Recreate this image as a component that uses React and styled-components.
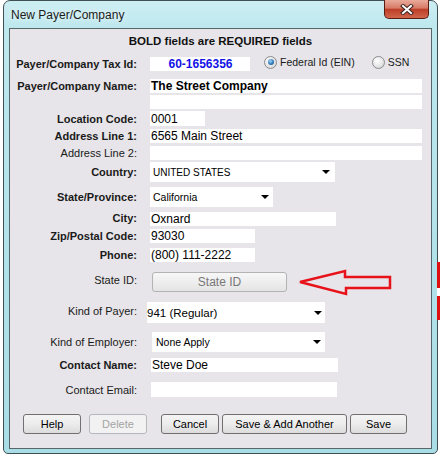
import React from "react";
import styled, { createGlobalStyle, css } from "styled-components";

const GlobalStyle = createGlobalStyle`
  body {
    margin: 0;
    background: #fff;
    font-family: "Liberation Sans", Arial, sans-serif;
  }
`;

const Page = styled.div`
  position: relative;
  width: 440px;
  height: 457px;
  overflow: hidden;
  padding-left: 3px;
  box-sizing: border-box;
`;

const Window = styled.div`
  width: 435px;
  height: 454px;
  box-sizing: border-box;
  border: 1px solid #3f4f54;
  border-radius: 7px 7px 5px 5px;
  background: linear-gradient(180deg, #cdeef3 0, #bde8ee 26px, #a9dde5 100%);
  display: flex;
  flex-direction: column;
  padding: 0 5px 4px 5px;
`;

const TitleBar = styled.div`
  height: 27px;
  display: flex;
  align-items: flex-start;
  flex-shrink: 0;
`;

const Title = styled.span`
  margin: 7px 0 0 2px;
  font-size: 12px;
  color: #1b1b1b;
  text-shadow: 0 0 6px #fff;
`;

const CloseButton = styled.div`
  margin: -1px 3px 0 auto;
  width: 45px;
  height: 19px;
  box-sizing: border-box;
  border: 1px solid #5a1d14;
  border-top: none;
  border-radius: 0 0 5px 5px;
  background: linear-gradient(180deg, #e9aa9b 0, #d67a66 45%, #bd3f28 52%, #d2654a 100%);
  display: flex;
  align-items: center;
  justify-content: center;
`;

const Client = styled.div`
  flex: 1;
  border: 1px solid #56676c;
  background: #e7e5e9;
  display: flex;
  flex-direction: column;
`;

const Header = styled.div`
  height: 23px;
  display: flex;
  align-items: center;
  justify-content: center;
  font-size: 11.5px;
  font-weight: bold;
  color: #111;
`;

const Row = styled.div`
  display: flex;
  align-items: center;
  height: ${(p) => p.$h}px;
  margin-top: ${(p) => p.$mt}px;
`;

const Label = styled.span`
  width: 127px;
  flex-shrink: 0;
  margin-right: 13px;
  text-align: right;
  white-space: nowrap;
  font-size: 11px;
  color: #1a1a1a;
  font-weight: ${(p) => (p.$req ? "bold" : "normal")};
  position: relative;
  top: ${(p) => p.$dy || 0}px;
`;

const TextBox = styled.div`
  width: ${(p) => p.$w}px;
  height: 100%;
  margin-left: ${(p) => p.$ml || 0}px;
  box-sizing: border-box;
  background: #fff;
  display: flex;
  align-items: center;
  padding-left: 1px;
  font-size: 12px;
  color: #000;
  white-space: nowrap;
  ${(p) =>
    p.$bold &&
    css`
      font-weight: bold;
    `}
  ${(p) =>
    p.$id &&
    css`
      justify-content: center;
      font-weight: bold;
      color: #1212e6;
    `}
`;

const Select = styled.div`
  width: ${(p) => p.$w}px;
  height: 100%;
  margin-left: ${(p) => p.$ml || 0}px;
  box-sizing: border-box;
  background: #fff;
  display: flex;
  align-items: center;
  padding: 0 ${(p) => p.$ar}px 0 ${(p) => p.$pl}px;
  font-size: ${(p) => p.$fs}px;
  color: #000;
  white-space: nowrap;
`;

const Arrow = styled.span`
  margin-left: auto;
  width: 0;
  height: 0;
  border-left: 4px solid transparent;
  border-right: 4px solid transparent;
  border-top: 4px solid #000;
`;

const RadioGroup = styled.div`
  display: flex;
  align-items: center;
  margin-left: 14px;
  position: relative;
  top: -2px;
`;

const Radio = styled.span`
  width: 11px;
  height: 11px;
  border-radius: 50%;
  border: 1px solid #8a8d90;
  background: radial-gradient(circle at 40% 35%, #fff 0, #e3e3e3 60%, #c9c9c9 100%);
  display: flex;
  align-items: center;
  justify-content: center;
  margin-left: ${(p) => p.$ml || 0}px;
  &::after {
    content: "";
    display: ${(p) => (p.$on ? "block" : "none")};
    width: 6px;
    height: 6px;
    border-radius: 50%;
    background: radial-gradient(circle at 40% 35%, #a6d6f6 0, #2f7bbd 55%, #143e6a 100%);
  }
`;

const RadioText = styled.span`
  font-size: 10.5px;
  color: #1a1a1a;
  margin-left: 3px;
`;

const GreyButton = styled.div`
  width: 135px;
  height: 100%;
  margin-left: 2px;
  box-sizing: border-box;
  border: 1px solid #b3b3b3;
  border-radius: 3px;
  background: linear-gradient(180deg, #f7f7f7 0, #eeeeee 50%, #e4e4e4 100%);
  display: flex;
  align-items: center;
  justify-content: center;
  font-size: 12px;
  color: #777;
`;

const ArrowMark = styled.svg`
  margin-left: 11px;
  flex-shrink: 0;
`;

const Button = styled.div`
  width: ${(p) => p.$w}px;
  height: 100%;
  margin-left: ${(p) => p.$ml}px;
  box-sizing: border-box;
  border: 1px solid ${(p) => (p.$off ? "#b4b8ba" : "#707070")};
  border-radius: 3px;
  background: ${(p) =>
    p.$off
      ? "#f2f2f2"
      : "linear-gradient(180deg, #f4f4f4 0, #ececec 50%, #dcdcdc 100%)"};
  display: flex;
  align-items: center;
  justify-content: center;
  font-size: 11px;
  color: ${(p) => (p.$off ? "#a3a3a3" : "#000")};
`;

const Backdrop = styled.svg`
  position: absolute;
  right: 0;
  top: 262px;
`;

export default function App() {
  return (
    <Page>
      <GlobalStyle />
      <Window>
        <TitleBar>
          <Title>New Payer/Company</Title>
          <CloseButton>
            <svg width="14" height="11" viewBox="0 0 14 11">
              <path d="M3 2 L11 9 M11 2 L3 9" stroke="#3a2520" strokeWidth="4" strokeLinecap="square" />
              <path d="M3 2 L11 9 M11 2 L3 9" stroke="#fff" strokeWidth="2" strokeLinecap="square" />
            </svg>
          </CloseButton>
        </TitleBar>
        <Client>
          <Header>BOLD fields are REQUIRED fields</Header>
          <Row $h={14} $mt={5}>
            <Label $req>Payer/Company Tax Id:</Label>
            <TextBox $w={100} $id>60-1656356</TextBox>
            <RadioGroup>
              <Radio $on />
              <RadioText>Federal Id (EIN)</RadioText>
              <Radio $ml={17} />
              <RadioText>SSN</RadioText>
            </RadioGroup>
          </Row>
          <Row $h={14} $mt={8}>
            <Label $req>Payer/Company Name:</Label>
            <TextBox $w={272} $bold>The Street Company</TextBox>
          </Row>
          <Row $h={14} $mt={2}>
            <Label />
            <TextBox $w={272} />
          </Row>
          <Row $h={15} $mt={2}>
            <Label $req>Location Code:</Label>
            <TextBox $w={55}>0001</TextBox>
          </Row>
          <Row $h={14} $mt={3}>
            <Label $req>Address Line 1:</Label>
            <TextBox $w={272}>6565 Main Street</TextBox>
          </Row>
          <Row $h={14} $mt={3}>
            <Label>Address Line 2:</Label>
            <TextBox $w={272} />
          </Row>
          <Row $h={20} $mt={2}>
            <Label $req>Country:</Label>
            <Select $w={185} $fs={10} $pl={3} $ar={5}>
              UNITED STATES
              <Arrow />
            </Select>
          </Row>
          <Row $h={20} $mt={5}>
            <Label $req>State/Province:</Label>
            <Select $w={123} $fs={10.5} $pl={3} $ar={4}>
              California
              <Arrow />
            </Select>
          </Row>
          <Row $h={14} $mt={5}>
            <Label $req $dy={-1}>City:</Label>
            <TextBox $w={186}>Oxnard</TextBox>
          </Row>
          <Row $h={14} $mt={3}>
            <Label $req>Zip/Postal Code:</Label>
            <TextBox $w={105}>93030</TextBox>
          </Row>
          <Row $h={14} $mt={5}>
            <Label $req>Phone:</Label>
            <TextBox $w={105}>(800) 111-2222</TextBox>
          </Row>
          <Row $h={20} $mt={10}>
            <Label $dy={-2}>State ID:</Label>
            <GreyButton>State ID</GreyButton>
            <ArrowMark width="95" height="27" viewBox="0 0 95 27">
              <polygon
                points="2,13 47,2 47,8 92,8 92,19 48,19 48,25"
                fill="none"
                stroke="#e8121a"
                strokeWidth="2.5"
                strokeLinejoin="miter"
              />
            </ArrowMark>
          </Row>
          <Row $h={21} $mt={10}>
            <Label $dy={-2}>Kind of Payer:</Label>
            <Select $w={178} $ml={-3} $fs={11.5} $pl={0} $ar={3}>
              941 (Regular)
              <Arrow />
            </Select>
          </Row>
          <Row $h={20} $mt={9}>
            <Label>Kind of Employer:</Label>
            <Select $w={173} $ml={2} $fs={10.5} $pl={4} $ar={4}>
              None Apply
              <Arrow />
            </Select>
          </Row>
          <Row $h={14} $mt={6}>
            <Label $req>Contact Name:</Label>
            <TextBox $w={187} $ml={1}>
              Steve Doe
            </TextBox>
          </Row>
          <Row $h={15} $mt={10}>
            <Label>Contact Email:</Label>
            <TextBox $w={186} $ml={1} />
          </Row>
          <Row $h={20} $mt={17}>
            <Button $w={58} $ml={13}>Help</Button>
            <Button $w={58} $ml={8} $off>
              Delete
            </Button>
            <Button $w={58} $ml={14}>Cancel</Button>
            <Button $w={125} $ml={3}>Save &amp; Add Another</Button>
            <Button $w={57} $ml={3}>Save</Button>
          </Row>
        </Client>
      </Window>
      <Backdrop width="3" height="70" viewBox="0 0 3 70">
        <rect x="0" y="0" width="3" height="26" fill="#e01010" />
        <rect x="0" y="26" width="3" height="8" fill="#fff" />
        <rect x="0" y="34" width="3" height="24" fill="#e01010" />
      </Backdrop>
    </Page>
  );
}
